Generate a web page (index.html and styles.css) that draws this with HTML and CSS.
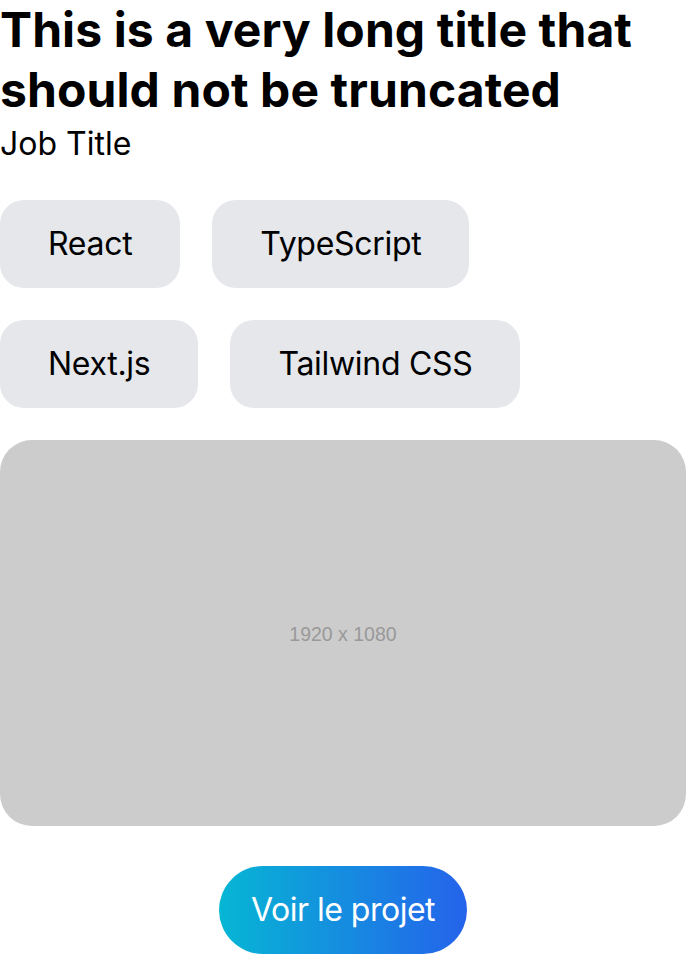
FILE: index.html
```html
<!DOCTYPE html>
<html>
<head>
<meta charset="utf-8">
<link rel="stylesheet" href="styles.css">
</head>
<body>
<div class="card">
  <h1 class="title">This is a very long title that should not be truncated</h1>
  <p class="job">Job Title</p>
  <div class="tags">
    <span class="tag">React</span>
    <span class="tag">TypeScript</span>
    <span class="tag">Next.js</span>
    <span class="tag">Tailwind CSS</span>
  </div>
  <div class="image"><span class="image-label">1920 x 1080</span></div>
  <div class="actions"><a class="btn" href="#">Voir le projet</a></div>
</div>
</body>
</html>
```
FILE: styles.css
```css
html, body { margin: 0; padding: 0; background: #fff; }
body { font-family: Inter, "Noto Sans", sans-serif; color: #000; }
.card { display: flex; flex-direction: column; }
.title { margin: 0; font-size: 48px; line-height: 60px; font-weight: 700; letter-spacing: 0.1px; }
.job { margin: 0; font-size: 32px; line-height: 48px; font-weight: 400; }
.tags { display: flex; flex-wrap: wrap; gap: 32px; margin-top: 32px; }
.tag { background: #e5e7eb; border-radius: 24px; padding: 24px 48px; font-size: 32px; line-height: 40px; letter-spacing: -0.3px; }
.image { margin-top: 32px; aspect-ratio: 16 / 9; background: #cccccc; border-radius: 32px; display: flex; align-items: center; justify-content: center; }
.image-label { font-family: "Liberation Sans", Arial, sans-serif; font-size: 19.5px; color: #999; padding-top: 4px; }
.actions { display: flex; justify-content: center; margin-top: 40px; }
.btn { display: block; padding: 24px 32px; border-radius: 44px; background: linear-gradient(to right, #06b6d4, #2563eb); color: #fff; text-decoration: none; font-size: 32px; line-height: 40px; letter-spacing: -0.5px; }
```
